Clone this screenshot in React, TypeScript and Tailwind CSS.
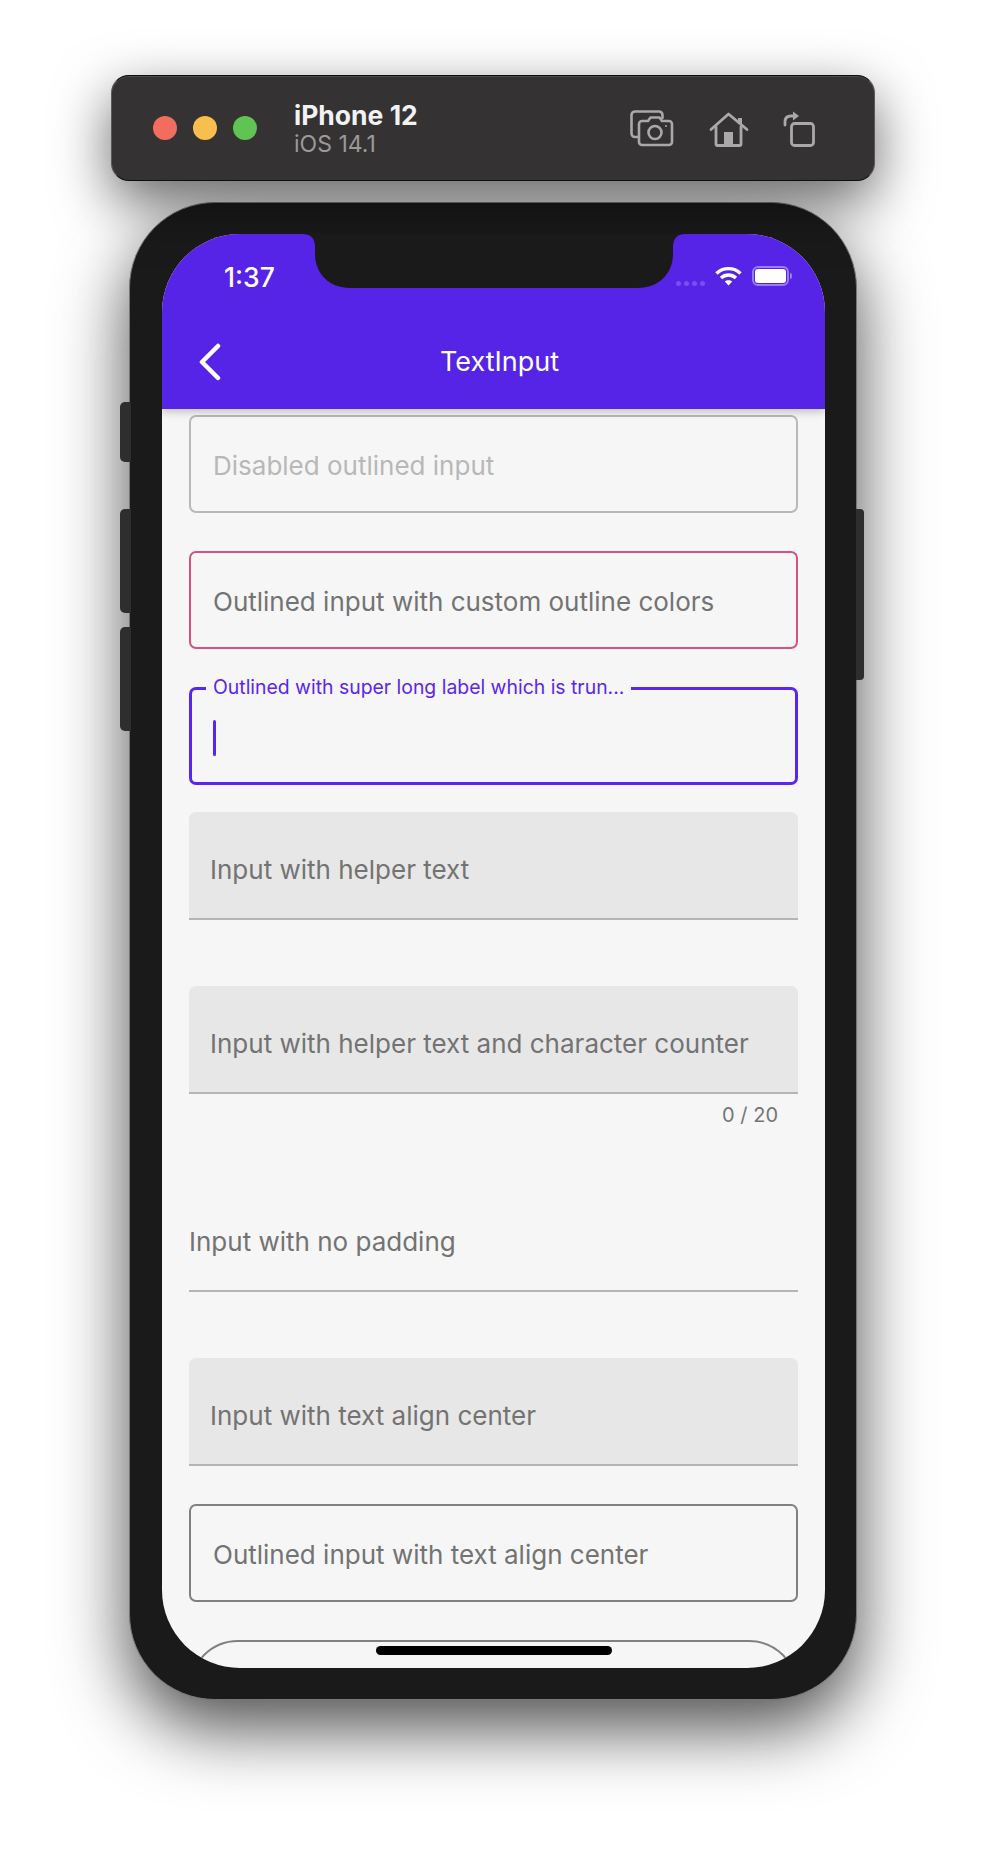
import React from "react";

const font = { fontFamily: "Inter, 'Noto Sans', sans-serif" };

function CameraIcon() {
  return (
    <svg width="44" height="37" viewBox="0 0 44 37" fill="none" stroke="#aaa8a8" strokeWidth="2.6" strokeLinejoin="round" strokeLinecap="round">
      <path d="M8 27H5a3.5 3.5 0 0 1-3.5-3.5V5A3.5 3.5 0 0 1 5 1.5h24A3.5 3.5 0 0 1 32.5 5v3" />
      <path d="M12 11h6l2.5-3.5h9L32 11h7a3 3 0 0 1 3 3v18a3 3 0 0 1-3 3H12a3 3 0 0 1-3-3V14a3 3 0 0 1 3-3z" />
      <circle cx="25" cy="22.5" r="6.5" />
      <circle cx="36" cy="16" r="1" fill="#aaa8a8" stroke="none" />
    </svg>
  );
}

function HomeIcon() {
  return (
    <svg width="40" height="35" viewBox="0 0 40 35" fill="none" stroke="#aaa8a8" strokeWidth="2.8" strokeLinecap="round" strokeLinejoin="round">
      <path d="M2 17.5 19.5 2 38 17.5" />
      <path d="M31 6v6" strokeWidth="4" strokeLinecap="butt" />
      <path d="M7 15v17a1.5 1.5 0 0 0 1.5 1.5h22A1.5 1.5 0 0 0 32 32V15" />
      <rect x="15" y="20" width="9" height="13" fill="#aaa8a8" stroke="none" />
    </svg>
  );
}

function RotateIcon() {
  return (
    <svg width="32" height="37" viewBox="0 0 32 37" fill="none" stroke="#aaa8a8" strokeWidth="2.8" strokeLinejoin="round">
      <rect x="8.5" y="13.5" width="22" height="22" rx="3" />
      <path d="M2 15v-3c0-4 2.500-6 6-6h3" strokeLinecap="round" />
      <path d="M10 1.500 16 6l-6 4.500z" fill="#aaa8a8" stroke="none" />
    </svg>
  );
}

function Wifi() {
  return (
    <svg width="27" height="20" viewBox="0 0 27 20" fill="none" stroke="#fff" strokeWidth="3.400">
      <path d="M1.500 7.500C8 1 19 1 25.500 7.500" />
      <path d="M6 12c4.300-4 10.700-4 15 0" />
      <path d="M13.500 19.500 9.800 15.500c2-1.800 5.400-1.800 7.400 0z" fill="#fff" stroke="none" />
    </svg>
  );
}

function Notch() {
  return (
    <svg className="absolute left-[140px] top-0" width="384" height="54" viewBox="0 0 384 54">
      <path d="M0 0Q13 0 13 13V20C13 40 28 54 48 54H336C356 54 371 40 371 20V13Q371 0 384 0Z" fill="#1a1a1a" />
    </svg>
  );
}

function Outlined({ text, className, textClass }: { text: string; className: string; textClass: string }) {
  return (
    <div className={`h-[98px] rounded-[7px] border-2 flex items-center pl-[22px] pt-[2px] text-[26px] ${className} ${textClass}`}>
      {text}
    </div>
  );
}

function Filled({ text, plain = false }: { text: string; plain?: boolean }) {
  return (
    <div className={`h-[108px] shrink-0 border-b-2 border-[#b5b5b5] flex items-center pt-[8px] text-[26px] text-[#737373] ${plain ? "" : "rounded-t-[7px] bg-[#e7e7e7] pl-[21px]"}`}>
      {text}
    </div>
  );
}

export default function App() {
  return (
    <div className="relative min-h-[1850px] bg-white flex flex-col items-center pt-[75px]" style={font}>
      <div className="relative z-10 w-[764px] h-[106px] rounded-[18px] bg-[#343233] border-x border-x-[#5a5859] border-y border-y-[#0e0e0e] shadow-[inset_0_1px_0_#4c4a4b,0_20px_56px_rgba(0,0,0,0.6)] flex items-center pl-[41px] pr-[59px]">
        <div className="flex gap-[16px]">
          <span className="w-[24px] h-[24px] rounded-full bg-[#f26d60]" />
          <span className="w-[24px] h-[24px] rounded-full bg-[#f8bf4f]" />
          <span className="w-[24px] h-[24px] rounded-full bg-[#5fc454]" />
        </div>
        <div className="ml-[37px] flex flex-col">
          <span className="text-[26.500px] leading-[32px] font-bold text-[#f2f2f2]">iPhone 12</span>
          <span className="text-[23px] leading-[26px] text-[#9b9999]">iOS 14.1</span>
        </div>
        <div className="ml-auto flex items-end gap-[35px]">
          <CameraIcon />
          <div className="-mr-[1px]"><HomeIcon /></div>
          <RotateIcon />
        </div>
      </div>

      <div className="relative mt-[21px] w-[728px] h-[1498px] rounded-[86px] bg-[#1a1a1a] border border-[#777777] shadow-[0_28px_70px_rgba(0,0,0,0.7)] pt-[31px] pl-[32px]">
        <span className="absolute -left-[10px] top-[199px] w-[11px] h-[60px] rounded-l-[5px] bg-[#2e2e2e]" />
        <span className="absolute -left-[10px] top-[306px] w-[11px] h-[104px] rounded-l-[5px] bg-[#2e2e2e]" />
        <span className="absolute -left-[10px] top-[424px] w-[11px] h-[104px] rounded-l-[5px] bg-[#2e2e2e]" />
        <span className="absolute -right-[8px] top-[306px] w-[8px] h-[171px] rounded-r-[4px] bg-[#2e2e2e]" />

        <div className="relative w-[663px] h-[1434px] rounded-[78px] overflow-hidden bg-[#f6f6f6]">
          <header className="relative z-10 h-[175px] bg-[#5624e6] shadow-[0_3px_8px_rgba(0,0,0,0.22)] text-white">
            <Notch />
            <span className="absolute left-[62px] top-[28px] text-[26.500px] leading-[30px] font-medium">1:37</span>
            <div className="absolute left-[514px] top-[47px] flex gap-[3px]">
              <i className="w-[5px] h-[5px] rounded-full bg-[#7a4ef0]" />
              <i className="w-[5px] h-[5px] rounded-full bg-[#7a4ef0]" />
              <i className="w-[5px] h-[5px] rounded-full bg-[#7a4ef0]" />
              <i className="w-[5px] h-[5px] rounded-full bg-[#7a4ef0]" />
            </div>
            <div className="absolute left-[553px] top-[32px]"><Wifi /></div>
            <div className="absolute left-[590px] top-[32px] flex items-center">
              <div className="w-[37px] h-[20px] rounded-[6px] border-2 border-[#9b7df2] p-[1px]">
                <div className="w-full h-full rounded-[3px] bg-white" />
              </div>
              <span className="ml-[1px] w-[2px] h-[6px] rounded-r-[2px] bg-[#9b7df2]" />
            </div>
            <svg className="absolute left-[36px] top-[109px]" width="24" height="38" viewBox="0 0 24 38" fill="none" stroke="#fff" strokeWidth="4.500" strokeLinecap="round" strokeLinejoin="round">
              <path d="M20 3 4 19l16 16" />
            </svg>
            <h1 className="absolute left-[278px] top-[109px] text-[27px] leading-[38px] font-normal">TextInput</h1>
          </header>

          <main className="flex flex-col px-[27px] pt-[6px]">
            <Outlined text="Disabled outlined input" className="border-[#b9b9b9]" textClass="text-[#b8b8b8]" />
            <div className="h-[38px] shrink-0" />
            <Outlined text="Outlined input with custom outline colors" className="border-[#d4527f]" textClass="text-[#737373]" />
            <div className="h-[38px] shrink-0" />
            <div className="relative h-[98px] rounded-[7px] border-[3px] border-[#5a26ec] flex items-center pl-[21px] pt-[3px]">
              <span className="absolute left-[14px] -top-[15px] bg-[#f6f6f6] px-[7px] text-[19.400px] leading-[24px] text-[#5a26ec] whitespace-nowrap">
                Outlined with super long label which is trun...
              </span>
              <span className="w-[3px] h-[36px] rounded-full bg-[#5a26ec]" />
            </div>
            <div className="h-[27px] shrink-0" />
            <Filled text="Input with helper text" />
            <div className="h-[66px] shrink-0" />
            <Filled text="Input with helper text and character counter" />
            <div className="h-[42px] pr-[20px] flex items-center justify-end text-[20px] text-[#757575]">0 / 20</div>
            <div className="h-[48px] shrink-0" />
            <Filled text="Input with no padding" plain />
            <div className="h-[66px] shrink-0" />
            <Filled text="Input with text align center" />
            <div className="h-[38px] shrink-0" />
            <Outlined text="Outlined input with text align center" className="border-[#808080]" textClass="text-[#737373]" />
            <div className="h-[38px] shrink-0" />
            <div className="h-[98px] shrink-0 rounded-[49px] border-2 border-[#808080]" />
          </main>

          <div className="absolute left-[214px] top-[1412px] w-[236px] h-[9px] rounded-full bg-black" />
        </div>
      </div>
    </div>
  );
}
